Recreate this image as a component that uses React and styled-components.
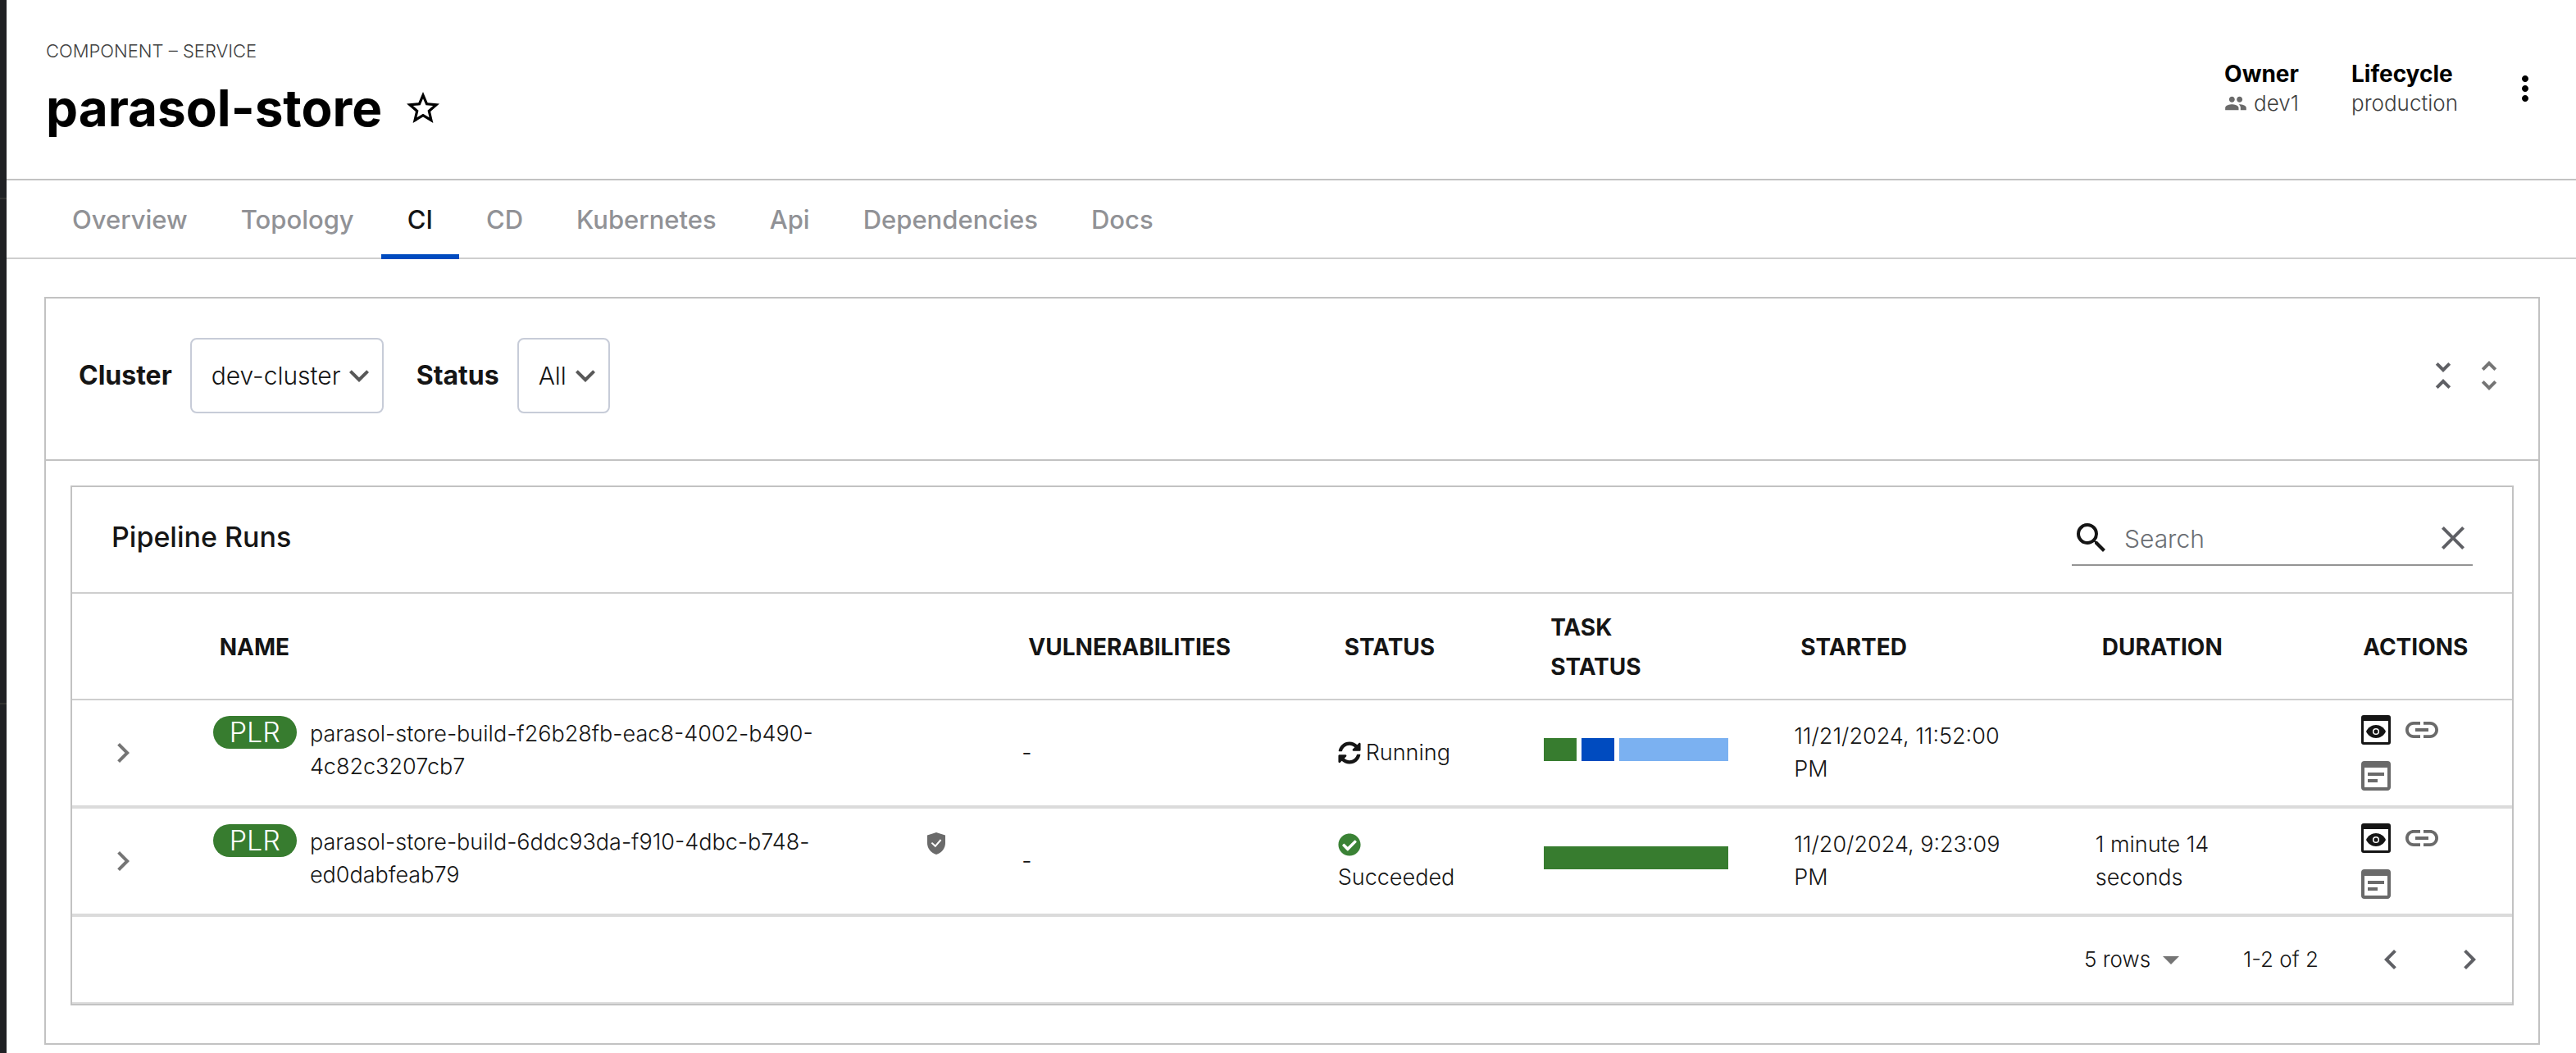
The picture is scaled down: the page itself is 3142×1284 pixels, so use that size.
import React from 'react';
import styled, { createGlobalStyle } from 'styled-components';
import {
  MdStarBorder,
  MdPeople,
  MdMoreVert,
  MdUnfoldLess,
  MdUnfoldMore,
  MdExpandMore,
  MdSearch,
  MdClear,
  MdChevronLeft,
  MdChevronRight,
  MdInsertLink,
  MdWysiwyg,
  MdArrowDropDown,
} from 'react-icons/md';
import { FaSyncAlt, FaCheckCircle } from 'react-icons/fa';

const c = {
  text: '#151515',
  muted: '#3f3f3f',
  icon: '#6a6a6a',
  steel: '#5f6065',
  line: '#c2c2c2',
  lineSoft: '#cecece',
  rowLine: '#dbdbdb',
  green: '#377c2f',
  blue: '#004bbf',
  sky: '#7bb1f1',
};

const GlobalStyle = createGlobalStyle`
  *, *::before, *::after { box-sizing: border-box; }
  body {
    margin: 0;
    background: #fff;
    color: ${c.text};
    font-family: Inter, "Open Sans", sans-serif;
    font-size: 26px;
    font-weight: 350;
    line-height: 40px;
  }
  button, input, select { font: inherit; color: inherit; }
  svg { display: block; flex: none; }
`;

const Shell = styled.div`
  display: grid;
  grid-template-columns: 8px minmax(0, 1fr);
  min-height: 100vh;
`;

const SideRail = styled.aside`
  display: flex;
  flex-direction: column;
  background: #202124;
`;

const RailSection = styled.div`
  height: ${(p) => p.$height}px;
  border-bottom: 2px solid #333331;
`;

const Main = styled.main`
  min-width: 0;
`;

const IconButton = styled.button`
  display: flex;
  align-items: center;
  justify-content: center;
  width: 48px;
  height: 48px;
  padding: 0;
  border: 0;
  background: none;
  color: ${(p) => p.$color || c.icon};
  font-size: 48px;
  cursor: pointer;
`;

/* Page header */

const PageHeader = styled.header`
  display: flex;
  align-items: flex-start;
  justify-content: space-between;
  padding: 46px 38px 48px 48px;
  border-bottom: 2px solid ${c.line};
`;

const Kind = styled.div`
  margin-bottom: 16px;
  color: ${c.muted};
  font-size: 22px;
  line-height: 32px;
  text-transform: uppercase;
`;

const TitleRow = styled.div`
  display: flex;
  align-items: center;
  gap: 26px;
`;

const Title = styled.h1`
  margin: 0;
  color: #000;
  font-size: 62px;
  font-weight: 700;
  line-height: 76px;
`;

const HeaderSide = styled.div`
  display: flex;
  align-items: center;
  padding-top: 26px;
`;

const Meta = styled.dl`
  margin: 0 64px 0 0;
  line-height: 36px;

  &:last-of-type { margin-right: 58px; }
`;

const MetaLabel = styled.dt`
  color: #000;
  font-size: 28px;
  font-weight: 700;
`;

const MetaValue = styled.dd`
  display: flex;
  align-items: center;
  gap: 8px;
  margin: 0;
  color: ${c.muted};

  svg { color: ${c.icon}; font-size: 28px; }
`;

/* Tabs */

const Tabs = styled.nav`
  display: flex;
  gap: 1px;
  padding-left: 48px;
  border-bottom: 2px solid ${c.lineSoft};
`;

const Tab = styled.a`
  margin-bottom: -2px;
  padding: 28px 32px 22px;
  border-bottom: 6px solid ${(p) => (p.$active ? c.blue : 'transparent')};
  color: ${(p) => (p.$active ? c.text : '#919296')};
  font-size: 31px;
  font-weight: 500;
  text-decoration: none;
`;

/* Cards */

const Content = styled.div`
  padding: 46px 44px 10px 46px;
`;

const Card = styled.section`
  border: 2px solid ${c.line};
`;

const FilterBar = styled.div`
  display: flex;
  align-items: center;
  padding: 48px 36px 56px 40px;
  border-bottom: 2px solid ${c.line};
`;

const Filter = styled.label`
  display: flex;
  align-items: center;
  gap: 22px;
  margin-right: 40px;
  font-size: 32px;
  font-weight: 700;
`;

const SelectBox = styled.span`
  position: relative;
  display: inline-flex;
  align-items: center;
  color: ${c.text};

  svg {
    position: absolute;
    right: ${(p) => (p.$plain ? 0 : 6)}px;
    color: ${(p) => (p.$plain ? '#757575' : '#585858')};
    font-size: 48px;
    pointer-events: none;
  }
`;

const FilterSelect = styled.select`
  appearance: none;
  height: 92px;
  padding: 0 50px 0 24px;
  border: 2px solid #c7ccd8;
  border-radius: 8px;
  background: #fff;
  font-size: 30px;
  font-weight: 350;
`;

const FoldButtons = styled.div`
  display: flex;
  gap: 8px;
  margin-left: auto;
`;

const CardBody = styled.div`
  padding: 30px 30px 46px;
`;

const Toolbar = styled.div`
  display: flex;
  align-items: center;
  justify-content: space-between;
  min-height: 128px;
  padding: 0 48px 2px;
`;

const CardTitle = styled.h2`
  margin: 0;
  padding-bottom: 4px;
  font-size: 34px;
  font-weight: 500;
  line-height: 40px;
`;

const SearchField = styled.label`
  display: flex;
  align-items: center;
  gap: 16px;
  width: 489px;
  height: 66px;
  border-bottom: 2px solid #949494;

  > svg { font-size: 48px; }
`;

const SearchInput = styled.input`
  flex: 1;
  min-width: 0;
  padding: 2px 0 0;
  border: 0;
  outline: 0;
  background: none;
  font-size: 30px;

  &::placeholder { color: #6b6e73; opacity: 1; }
`;

/* Table */

const Table = styled.table`
  width: 100%;
  table-layout: fixed;
  border-collapse: separate;
  border-spacing: 0;
`;

const Col = styled.col`
  width: ${(p) => p.$share}%;
`;

const Th = styled.th`
  height: 132px;
  padding: 2px 120px 0 28px;
  border-top: 2px solid ${c.lineSoft};
  border-bottom: 2px solid ${c.lineSoft};
  font-size: 28px;
  font-weight: 700;
  line-height: 48px;
  text-align: left;
  text-transform: uppercase;
`;

const Td = styled.td`
  height: 132px;
  padding: 0 ${(p) => p.$end ?? 80}px 0 ${(p) => p.$start ?? 20}px;
  border-bottom: 4px solid ${c.rowLine};
  font-size: 27px;
  vertical-align: middle;
`;

const NameCell = styled.div`
  display: flex;
  align-items: flex-start;
  gap: 16px;
  padding-bottom: 8px;
`;

const Badge = styled.span`
  flex: none;
  padding: 0 20px;
  border-radius: 20px;
  background: ${c.green};
  color: #fff;
  font-size: 34px;
`;

const RunName = styled.span`
  max-width: 720px;
  padding-top: 2px;
`;

const SignedMark = styled.span`
  display: flex;
  align-items: center;
  height: 46px;
  margin-left: auto;
`;

const StatusCell = styled.div`
  display: flex;
  flex-wrap: wrap;
  align-items: center;
  column-gap: 6px;

  svg {
    height: 40px;
    font-size: 28px;
    color: ${(p) => (p.$tone === 'ok' ? '#3a8235' : c.text)};
  }
`;

const TaskBar = styled.div`
  display: flex;
  gap: 6px;
  margin-bottom: 8px;
`;

const TaskSegment = styled.span`
  flex: ${(p) => p.$weight} 1 0;
  height: 28px;
  background: ${(p) => p.$color};
`;

const Actions = styled.div`
  display: flex;
  flex-wrap: wrap;
  gap: 8px;
`;

const Footer = styled.footer`
  display: flex;
  align-items: center;
  justify-content: flex-end;
  gap: 64px;
  min-height: 106px;
  padding-right: 28px;
  border-bottom: 2px solid ${c.rowLine};
`;

const RowsSelect = styled.select`
  appearance: none;
  padding: 0 48px 0 0;
  border: 0;
  background: none;
`;

const Pager = styled.div`
  display: flex;
  gap: 48px;
`;

const ShieldIcon = () => (
  <svg width="22" height="27" viewBox="0 0 22 27" aria-label="Signed">
    <path d="M11 0 22 3.6V13c0 6-4 12-11 14C4 25 0 19 0 13V3.6z" fill="#6a6a6a" />
    <path d="m5.4 12.6 4.4 4.2L16.6 9" fill="none" stroke="#fff" strokeWidth="2" />
  </svg>
);

const PreviewIcon = () => (
  <svg width="36" height="36" viewBox="0 0 36 36" aria-hidden="true">
    <path
      fillRule="evenodd"
      fill="#151515"
      d="M3 0h30a3 3 0 0 1 3 3v30a3 3 0 0 1-3 3H3a3 3 0 0 1-3-3V3a3 3 0 0 1 3-3zm0 7v26h30V7z"
    />
    <path d="M6 20c2.2-4.9 6.8-8 12-8s9.8 3.1 12 8c-2.2 4.9-6.8 8-12 8S8.2 24.9 6 20z" fill="#151515" />
    <circle cx="18" cy="20" r="3.3" fill="#151515" stroke="#fff" strokeWidth="1.5" />
  </svg>
);

const TABS = ['Overview', 'Topology', 'CI', 'CD', 'Kubernetes', 'Api', 'Dependencies', 'Docs'];

const COLUMNS = [
  { label: '', share: 5.1 },
  { label: 'Name', share: 33.15 },
  { label: 'Vulnerabilities', share: 12.95 },
  { label: 'Status', share: 8.45 },
  { label: 'Task status', share: 10.25 },
  { label: 'Started', share: 12.35 },
  { label: 'Duration', share: 10.7 },
  { label: 'Actions', share: 7.05 },
];

const RUNS = [
  {
    name: 'parasol-store-build-f26b28fb-eac8-4002-b490-4c82c3207cb7',
    status: 'Running',
    tasks: [
      { weight: 40, color: c.green },
      { weight: 40, color: c.blue },
      { weight: 133, color: c.sky },
    ],
    started: '11/21/2024, 11:52:00 PM',
    duration: '',
  },
  {
    name: 'parasol-store-build-6ddc93da-f910-4dbc-b748-ed0dabfeab79',
    signed: true,
    status: 'Succeeded',
    tasks: [{ weight: 1, color: c.green }],
    started: '11/20/2024, 9:23:09 PM',
    duration: '1 minute 14 seconds',
  },
];

function RunRow({ run }) {
  const ok = run.status === 'Succeeded';
  return (
    <tr>
      <Td $start={38} $end={0}>
        <IconButton $color="#757575" aria-label="Expand row">
          <MdChevronRight />
        </IconButton>
      </Td>
      <Td $end={73}>
        <NameCell>
          <Badge>PLR</Badge>
          <RunName>{run.name}</RunName>
          {run.signed && (
            <SignedMark>
              <ShieldIcon />
            </SignedMark>
          )}
        </NameCell>
      </Td>
      <Td>-</Td>
      <Td>
        <StatusCell $tone={ok ? 'ok' : 'busy'}>
          {ok ? <FaCheckCircle /> : <FaSyncAlt />}
          <span>{run.status}</span>
        </StatusCell>
      </Td>
      <Td $end={60}>
        <TaskBar>
          {run.tasks.map((t) => (
            <TaskSegment key={t.color} $weight={t.weight} $color={t.color} />
          ))}
        </TaskBar>
      </Td>
      <Td>{run.started}</Td>
      <Td>{run.duration}</Td>
      <Td>
        <Actions>
          <IconButton aria-label="View output">
            <PreviewIcon />
          </IconButton>
          <IconButton aria-label="View SBOM">
            <MdInsertLink />
          </IconButton>
          <IconButton aria-label="View logs">
            <MdWysiwyg />
          </IconButton>
        </Actions>
      </Td>
    </tr>
  );
}

export default function App() {
  return (
    <>
      <GlobalStyle />
      <Shell>
        <SideRail>
          <RailSection $height={243} />
          <RailSection $height={616} />
        </SideRail>
        <Main>
          <PageHeader>
            <div>
              <Kind>component – service</Kind>
              <TitleRow>
                <Title>parasol-store</Title>
                <IconButton $color="#000" aria-label="Add to favorites">
                  <MdStarBorder />
                </IconButton>
              </TitleRow>
            </div>
            <HeaderSide>
              <Meta>
                <MetaLabel>Owner</MetaLabel>
                <MetaValue>
                  <MdPeople />
                  dev1
                </MetaValue>
              </Meta>
              <Meta>
                <MetaLabel>Lifecycle</MetaLabel>
                <MetaValue>production</MetaValue>
              </Meta>
              <IconButton $color="#000" aria-label="More options">
                <MdMoreVert />
              </IconButton>
            </HeaderSide>
          </PageHeader>

          <Tabs>
            {TABS.map((t) => (
              <Tab key={t} href={`#${t.toLowerCase()}`} $active={t === 'CI'}>
                {t}
              </Tab>
            ))}
          </Tabs>

          <Content>
            <Card>
              <FilterBar>
                <Filter>
                  Cluster
                  <SelectBox>
                    <FilterSelect defaultValue="dev-cluster">
                      <option>dev-cluster</option>
                    </FilterSelect>
                    <MdExpandMore />
                  </SelectBox>
                </Filter>
                <Filter>
                  Status
                  <SelectBox>
                    <FilterSelect defaultValue="All">
                      <option>All</option>
                    </FilterSelect>
                    <MdExpandMore />
                  </SelectBox>
                </Filter>
                <FoldButtons>
                  <IconButton $color={c.steel} aria-label="Collapse all">
                    <MdUnfoldLess />
                  </IconButton>
                  <IconButton $color="#757575" aria-label="Expand all">
                    <MdUnfoldMore />
                  </IconButton>
                </FoldButtons>
              </FilterBar>

              <CardBody>
                <Card>
                  <Toolbar>
                    <CardTitle>Pipeline Runs</CardTitle>
                    <SearchField>
                      <MdSearch />
                      <SearchInput type="text" placeholder="Search" aria-label="Search" />
                      <IconButton $color={c.steel} aria-label="Clear search">
                        <MdClear />
                      </IconButton>
                    </SearchField>
                  </Toolbar>

                  <Table>
                    <colgroup>
                      {COLUMNS.map((col) => (
                        <Col key={col.label} $share={col.share} />
                      ))}
                    </colgroup>
                    <thead>
                      <tr>
                        {COLUMNS.map((col) => (
                          <Th key={col.label} scope="col">
                            {col.label}
                          </Th>
                        ))}
                      </tr>
                    </thead>
                    <tbody>
                      {RUNS.map((run) => (
                        <RunRow key={run.name} run={run} />
                      ))}
                    </tbody>
                  </Table>

                  <Footer>
                    <SelectBox $plain>
                      <RowsSelect defaultValue="5 rows" aria-label="Rows per page">
                        <option>5 rows</option>
                      </RowsSelect>
                      <MdArrowDropDown />
                    </SelectBox>
                    <span>1-2 of 2</span>
                    <Pager>
                      <IconButton $color={c.steel} aria-label="Previous page">
                        <MdChevronLeft />
                      </IconButton>
                      <IconButton $color={c.steel} aria-label="Next page">
                        <MdChevronRight />
                      </IconButton>
                    </Pager>
                  </Footer>
                </Card>
              </CardBody>
            </Card>
          </Content>
        </Main>
      </Shell>
    </>
  );
}
